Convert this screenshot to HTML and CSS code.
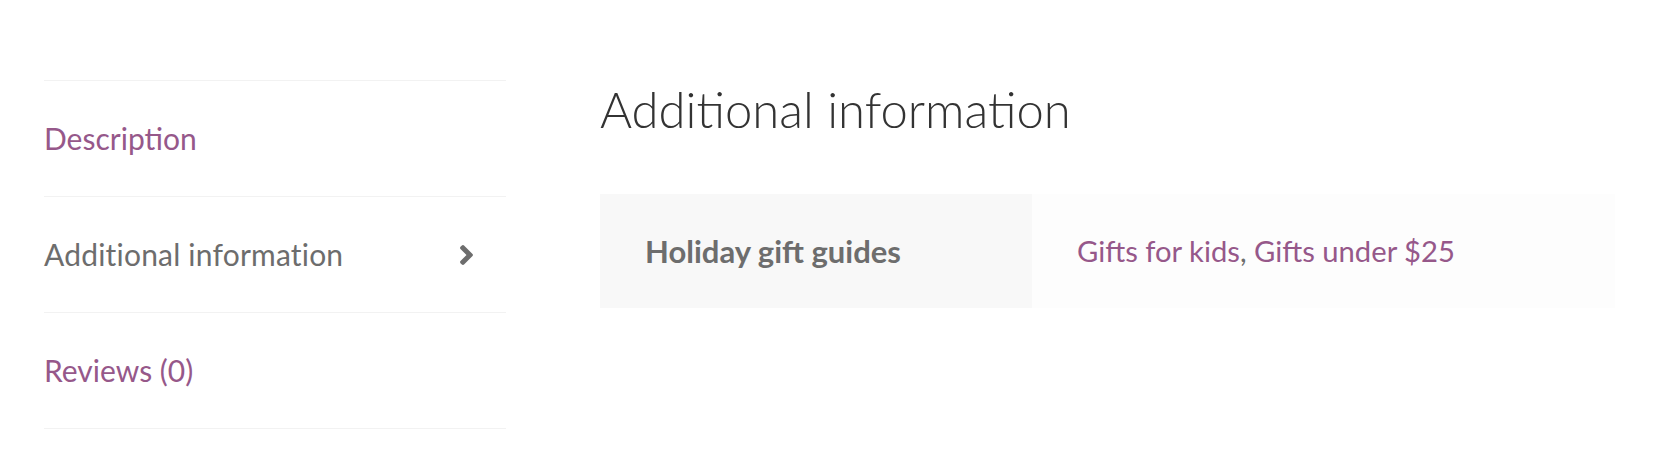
FILE: index.html
```html
<!DOCTYPE html>
<html lang="en">
<head>
<meta charset="utf-8">
<title>Additional information</title>
<link rel="stylesheet" href="styles.css">
</head>
<body>
<div class="product-tabs">
  <ul class="tabs">
    <li class="tab"><a class="tab-link" href="#">Description</a></li>
    <li class="tab active"><a class="tab-link" href="#"><span>Additional information</span>
      <svg class="chevron" width="13" height="20" viewBox="25 96 206 320" aria-hidden="true"><path d="M224.3 273l-136 136c-9.4 9.4-24.6 9.4-33.9 0l-22.6-22.6c-9.4-9.4-9.4-24.6 0-33.9l96.4-96.4-96.4-96.4c-9.4-9.4-9.4-24.6 0-33.9L54.3 103c9.4-9.4 24.6-9.4 33.9 0l136 136c9.5 9.4 9.5 24.6.1 34z"/></svg></a></li>
    <li class="tab"><a class="tab-link" href="#">Reviews (0)</a></li>
  </ul>
  <div class="panel">
    <h2 class="panel-title">Additional information</h2>
    <table class="attributes">
      <tr>
        <th class="attr-label">Holiday gift guides</th>
        <td class="attr-value"><a href="#">Gifts for kids</a>, <a href="#">Gifts under $25</a></td>
      </tr>
    </table>
  </div>
</div>
</body>
</html>
```

FILE: styles.css
```css
html, body {
  margin: 0;
  padding: 0;
  background: #ffffff;
}

body {
  font-family: "Lato", "Open Sans", sans-serif;
  color: #6d6d6d;
}

.product-tabs {
  display: grid;
  grid-template-columns: 462px 1015px;
  column-gap: 94px;
  padding: 80px 0 0 44px;
  align-items: start;
}

.tabs {
  list-style: none;
  margin: 0;
  padding: 0;
  border-top: 1px solid #f2f2f2;
}

.tab {
  border-bottom: 1px solid #f2f2f2;
}

.tab-link {
  display: flex;
  align-items: center;
  justify-content: space-between;
  padding: 32px 33px 32px 0;
  font-size: 30px;
  line-height: 51px;
  color: #96588a;
  text-decoration: none;
}

.tab.active .tab-link {
  color: #6d6d6d;
  letter-spacing: 0.2px;
}

.chevron {
  fill: #6d6d6d;
  display: block;
}

.panel-title {
  margin: 0 0 56px;
  font-size: 49px;
  line-height: 58px;
  font-weight: 300;
  color: #333333;
}

.attributes {
  width: 100%;
  border-collapse: collapse;
  border-spacing: 0;
}

.attr-label,
.attr-value {
  padding: 32px 45px;
  line-height: 50px;
  text-align: left;
  vertical-align: middle;
}

.attr-label {
  width: 342px;
  background: #f8f8f8;
  font-size: 31px;
  font-weight: 700;
  color: #6d6d6d;
}

.attr-value {
  background: #fdfdfd;
  font-size: 29.2px;
  color: #6d6d6d;
}

.attr-value a {
  color: #96588a;
  text-decoration: none;
}
```
